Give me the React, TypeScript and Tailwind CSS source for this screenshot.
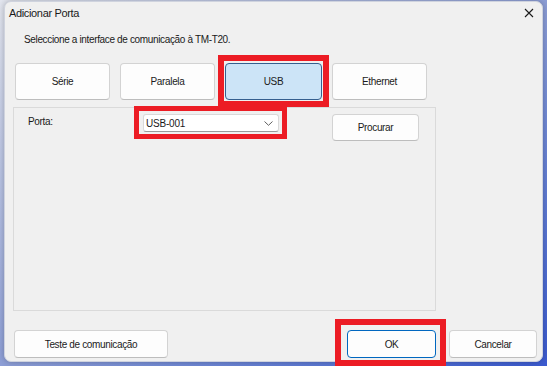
import type { ReactNode } from 'react'

const font = { fontFamily: '"Liberation Sans", Arial, sans-serif' }

function WinButton({
  children,
  className = '',
}: {
  children: ReactNode
  className?: string
}) {
  return (
    <button
      type="button"
      className={`flex items-center justify-center rounded-[4px] border text-[10px] tracking-[-0.35px] text-[#1b1b1b] ${className}`}
    >
      {children}
    </button>
  )
}

const plain = 'border-[#d3d3d3] border-b-[#bdbdbd] bg-[#fdfdfd]'

export default function App() {
  return (
    <div
      className="relative h-[366px] w-[547px] overflow-hidden bg-gradient-to-br from-[#e3e6ef] via-[#8d9ed6] to-[#3b5ad0]"
      style={font}
    >
      <div className="ml-[4px] mt-[1px] flex h-[361px] w-[539px] flex-col rounded-[7px] border border-[#cfd3de] bg-[#f0f0f0] shadow-[0_0_6px_rgba(0,0,0,0.25)]">
        {/* title bar */}
        <div className="flex h-[22px] items-center justify-between pl-[4px] pr-[8px]">
          <span className="text-[11px] tracking-[-0.35px] text-[#1a1a1a]">Adicionar Porta</span>
          <svg width="10" height="10" viewBox="0 0 10 10" className="text-[#1a1a1a]">
            <path d="M1 1L9 9M9 1L1 9" stroke="currentColor" strokeWidth="1.1" />
          </svg>
        </div>

        <p className="mt-[8px] pl-[19px] text-[10px] leading-[15px] tracking-[-0.35px] text-[#1a1a1a]">
          Seleccione a interface de comunicação à TM-T20.
        </p>

        {/* interface tabs */}
        <div className="ml-[10px] mt-[16px] flex gap-[10px]">
          <WinButton className={`h-[37px] w-[95px] ${plain}`}>Série</WinButton>
          <WinButton className={`h-[37px] w-[95px] ${plain}`}>Paralela</WinButton>
          <WinButton className="h-[37px] w-[97px] border-[#355f8f] bg-[#cce4f7]">USB</WinButton>
          <WinButton className={`h-[37px] w-[95px] ${plain}`}>Ethernet</WinButton>
        </div>

        {/* port panel */}
        <div className="ml-[8px] mt-[7px] flex h-[204px] w-[423px] items-start border border-[#dadada] pt-[6px]">
          <span className="w-[129px] pl-[14px] text-[10px] leading-[15px] tracking-[-0.35px] text-[#1a1a1a]">
            Porta:
          </span>
          <div className="flex h-[18px] w-[136px] items-center justify-between rounded-[3px] border border-[#d9d9d9] border-b-[#9a9a9a] bg-white pl-[2px] pr-[5px]">
            <span className="text-[10px] tracking-[-0.2px] text-[#1a1a1a]">USB-001</span>
            <svg width="9" height="5" viewBox="0 0 9 5">
              <path d="M0.5 0.5L4.5 4.3L8.5 0.5" fill="none" stroke="#606060" strokeWidth="1" />
            </svg>
          </div>
          <WinButton className={`ml-[53px] h-[27px] w-[87px] ${plain}`}>Procurar</WinButton>
        </div>

        {/* footer */}
        <div className="mt-[19px] flex items-center justify-between pl-[9px] pr-[5px]">
          <WinButton className={`h-[28px] w-[154px] ${plain}`}>Teste de comunicação</WinButton>
          <div className="flex gap-[13px]">
            <WinButton className="h-[28px] w-[89px] border-[#0067c0] bg-[#fdfdfd]">OK</WinButton>
            <WinButton className={`h-[28px] w-[88px] ${plain}`}>Cancelar</WinButton>
          </div>
        </div>
      </div>

      {/* red highlight annotations */}
      <div className="pointer-events-none absolute left-[218px] top-[55px] h-[52px] w-[111px] border-[6px] border-[#ec1c24]" />
      <div className="pointer-events-none absolute left-[134px] top-[106px] h-[33px] w-[153px] border-[5px] border-[#ec1c24]" />
      <div className="pointer-events-none absolute left-[335px] top-[319px] h-[47px] w-[111px] border-[6px] border-[#ec1c24]" />
    </div>
  )
}
